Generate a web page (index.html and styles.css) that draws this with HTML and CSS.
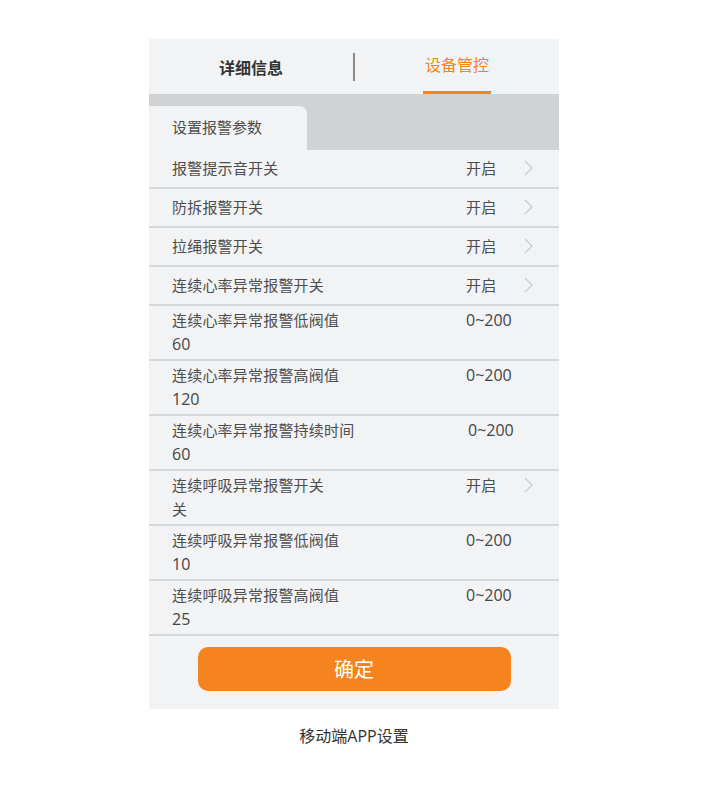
FILE: index.html
```html
<!DOCTYPE html>
<html lang="zh">
<head>
    <meta charset="UTF-8">
    <meta name="viewport" content="width=device-width, initial-scale=1.0">
    <title>移动端APP设置</title>
    <link rel="stylesheet" href="styles.css">
</head>
<body>
    <div class="figure">
        <div class="panel">
            <!-- 顶部切换 -->
            <div class="top-tabs">
                <div class="top-tab">详细信息</div>
                <div class="divider"></div>
                <div class="top-tab active"><span>设备管控</span></div>
            </div>

            <div class="sub-tabs">
                <div class="sub-tab">设置报警参数</div>
            </div>

            <div class="list">
                <div class="row">
                    <div class="label">报警提示音开关</div>
                    <div class="value">开启</div>
                    <div class="arrow"><svg width="9" height="16" viewBox="0 0 9 16"><path d="M1 1 L8 8 L1 15" fill="none" stroke="#c8c9cc" stroke-width="1.2"/></svg></div>
                </div>
                <div class="row">
                    <div class="label">防拆报警开关</div>
                    <div class="value">开启</div>
                    <div class="arrow"><svg width="9" height="16" viewBox="0 0 9 16"><path d="M1 1 L8 8 L1 15" fill="none" stroke="#c8c9cc" stroke-width="1.2"/></svg></div>
                </div>
                <div class="row">
                    <div class="label">拉绳报警开关</div>
                    <div class="value">开启</div>
                    <div class="arrow"><svg width="9" height="16" viewBox="0 0 9 16"><path d="M1 1 L8 8 L1 15" fill="none" stroke="#c8c9cc" stroke-width="1.2"/></svg></div>
                </div>
                <div class="row">
                    <div class="label">连续心率异常报警开关</div>
                    <div class="value">开启</div>
                    <div class="arrow"><svg width="9" height="16" viewBox="0 0 9 16"><path d="M1 1 L8 8 L1 15" fill="none" stroke="#c8c9cc" stroke-width="1.2"/></svg></div>
                </div>
                <div class="row two">
                    <div class="label">连续心率异常报警低阀值<div class="current num">60</div></div>
                    <div class="value num">0~200</div>
                </div>
                <div class="row two">
                    <div class="label">连续心率异常报警高阀值<div class="current num">120</div></div>
                    <div class="value num">0~200</div>
                </div>
                <div class="row two">
                    <div class="label">连续心率异常报警持续时间<div class="current num">60</div></div>
                    <div class="value num shift">0~200</div>
                </div>
                <div class="row two">
                    <div class="label">连续呼吸异常报警开关<div class="current">关</div></div>
                    <div class="value">开启</div>
                    <div class="arrow"><svg width="9" height="16" viewBox="0 0 9 16"><path d="M1 1 L8 8 L1 15" fill="none" stroke="#c8c9cc" stroke-width="1.2"/></svg></div>
                </div>
                <div class="row two">
                    <div class="label">连续呼吸异常报警低阀值<div class="current num">10</div></div>
                    <div class="value num">0~200</div>
                </div>
                <div class="row two">
                    <div class="label">连续呼吸异常报警高阀值<div class="current num">25</div></div>
                    <div class="value num">0~200</div>
                </div>
            </div>

            <div class="footer">
                <button class="confirm">确定</button>
            </div>
        </div>
        <p class="caption">移动端APP设置</p>
    </div>
</body>
</html>
```

FILE: styles.css
```css
body {
    margin: 0;
    padding: 0 1px 0 0;
    background-color: #ffffff;
    font-family: "Open Sans", "Noto Sans CJK SC", sans-serif;
    color: #4d4d4d;
}

.figure {
    width: 410px;
    margin: 39px auto 0;
}

.panel {
    background-color: #f2f3f5;
}

.top-tabs {
    height: 55px;
    display: flex;
    align-items: stretch;
}

.top-tab {
    flex: 1;
    display: flex;
    align-items: center;
    justify-content: center;
    font-size: 16px;
    font-weight: bold;
    color: #333333;
}

.top-tab.active {
    color: #f5841f;
    font-weight: normal;
}

.top-tab.active span {
    height: 55px;
    line-height: 53px;
    padding: 0 2px;
    box-sizing: border-box;
    border-bottom: 3px solid #f5841f;
}

.divider {
    width: 2px;
    height: 28px;
    margin-top: 14px;
    background-color: #8a8a8a;
}

.sub-tabs {
    background-color: #d1d2d4;
    height: 56px;
    display: flex;
    align-items: flex-end;
}

.sub-tab {
    width: 158px;
    height: 44px;
    box-sizing: border-box;
    padding-left: 23px;
    line-height: 42px;
    background-color: #f2f3f5;
    border-top-right-radius: 8px;
    font-size: 15px;
    color: #4d4d4d;
}

.row {
    display: flex;
    align-items: center;
    height: 39px;
    box-sizing: border-box;
    padding-left: 23px;
    padding-bottom: 2px;
    border-bottom: 2px solid #d6d7d9;
    font-size: 15px;
    letter-spacing: 0.2px;
}

.row.two {
    height: 55px;
    align-items: flex-start;
    padding-top: 2px;
    padding-bottom: 0;
    line-height: 24px;
}

.label {
    width: 294px;
}

.current {
    line-height: 24px;
}

.num {
    font-size: 16px;
    letter-spacing: 0;
    color: #454545;
}

.value {
    width: 58px;
}

.value.shift {
    padding-left: 2px;
}

.arrow {
    display: flex;
    align-items: center;
    height: 20px;
}

.row.two .arrow {
    height: 24px;
}

.footer {
    height: 73px;
    display: flex;
    justify-content: center;
    align-items: flex-start;
    padding-top: 11px;
    box-sizing: border-box;
}

.confirm {
    width: 313px;
    height: 44px;
    background-color: #f5841f;
    color: #ffffff;
    border: none;
    border-radius: 10px;
    font-family: "Noto Sans CJK SC", sans-serif;
    font-size: 20px;
    line-height: 40px;
    cursor: pointer;
}

.caption {
    margin: 14px 0 0;
    text-align: center;
    font-size: 16px;
    color: #333333;
}
```
